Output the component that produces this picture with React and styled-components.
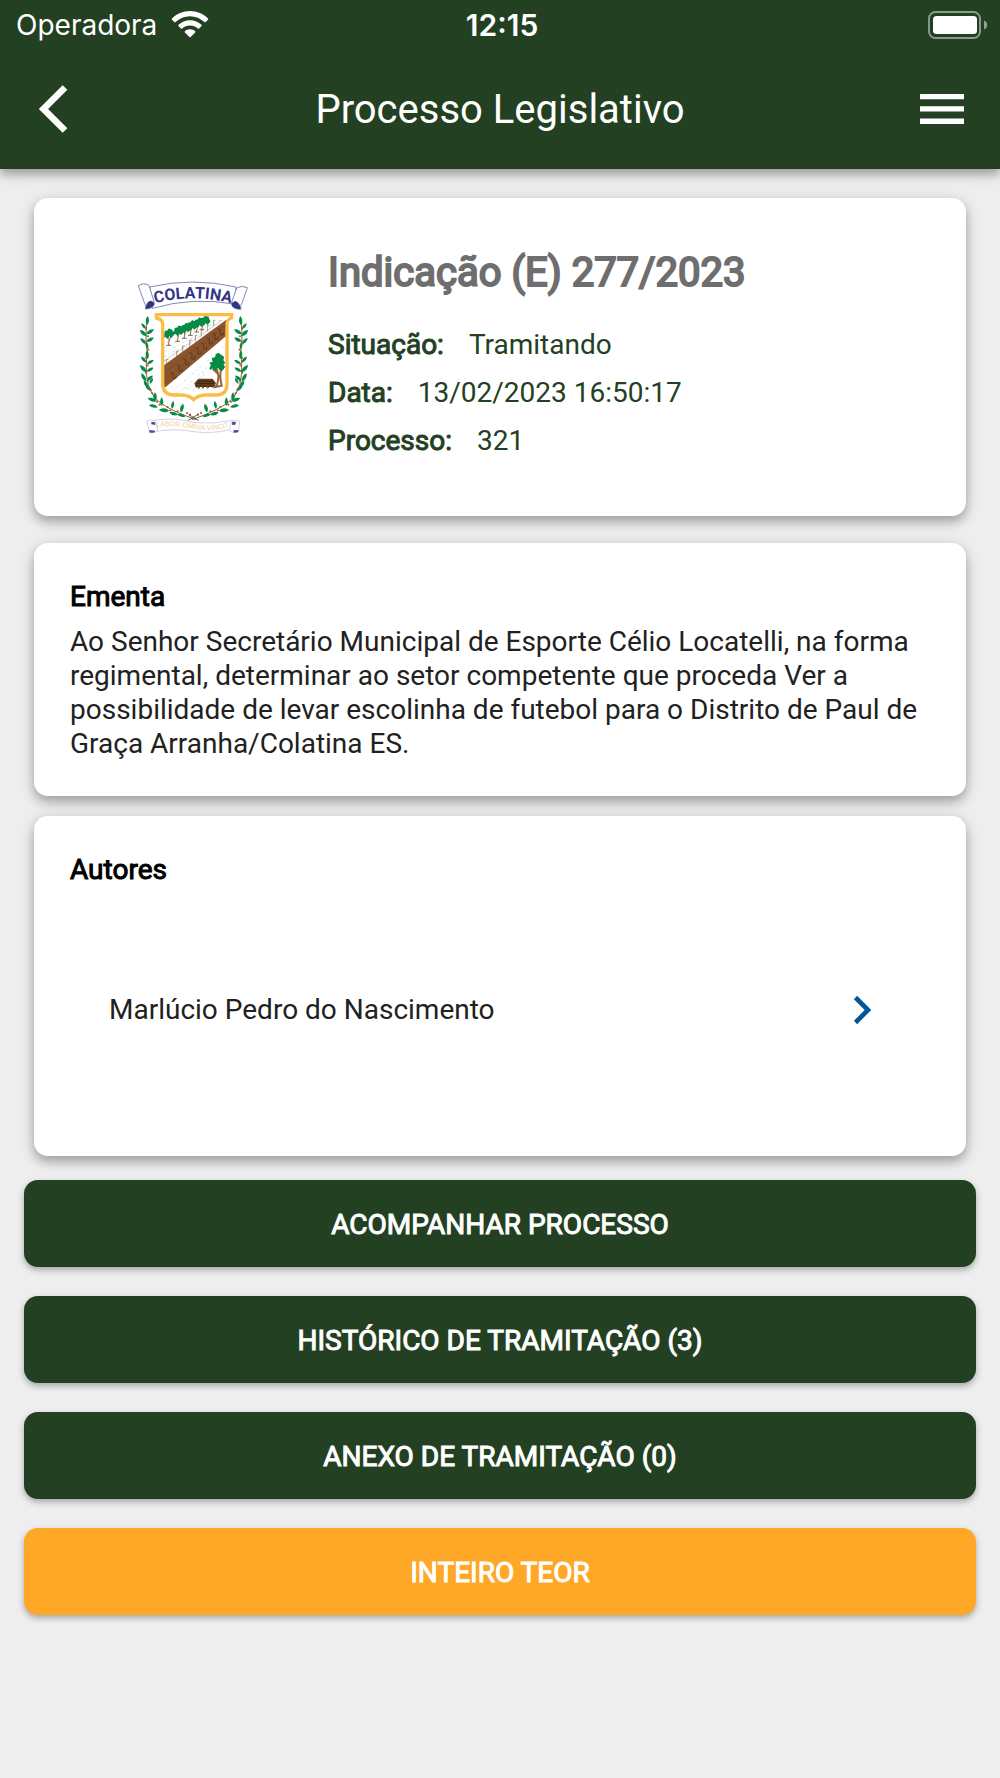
import React from "react";
import styled, { createGlobalStyle } from "styled-components";

const GREEN = "#234122";

const GlobalStyle = createGlobalStyle`
  *, *::before, *::after { box-sizing: border-box; }
  body {
    margin: 0;
    background: #eeeeee;
    color: #212121;
    font-family: Roboto, sans-serif;
    font-size: 28px;
    line-height: 34px;
  }
  h1, h2, p, dl, dt, dd, ul { margin: 0; padding: 0; }
  ul { list-style: none; }
  svg { display: block; }
`;

const Page = styled.div`
  min-height: 100vh;
  background: #eeeeee;
`;

const Header = styled.header`
  background: ${GREEN};
  color: #ffffff;
  box-shadow: 0 5px 10px rgba(0, 0, 0, 0.3), 0 2px 18px rgba(0, 0, 0, 0.12);
`;

const StatusBar = styled.div`
  display: grid;
  grid-template-columns: 1fr auto 1fr;
  align-items: center;
  height: 49px;
  padding: 0 12px 0 16px;
  font-family: Inter, sans-serif;
`;

const Carrier = styled.div`
  display: flex;
  align-items: center;
  gap: 14px;
`;

const Clock = styled.time`
  font-size: 30px;
  font-weight: 600;
`;

const BatteryBox = styled.div`
  justify-self: end;
`;

const Toolbar = styled.div`
  display: flex;
  align-items: center;
  justify-content: space-between;
  height: 120px;
  padding: 0 24px;
`;

const IconButton = styled.button`
  display: flex;
  align-items: center;
  justify-content: center;
  width: 68px;
  height: 68px;
  padding: 0;
  border: 0;
  background: none;
  color: inherit;
  cursor: pointer;
`;

const BackButton = styled(IconButton)`
  justify-content: flex-start;
  padding-left: 12px;
`;

const ScreenTitle = styled.h1`
  padding-top: 2px;
  font-size: 40px;
  line-height: 50px;
  font-weight: 400;
`;

const Content = styled.main`
  display: flex;
  flex-direction: column;
  padding: 29px 24px 0;
`;

const Card = styled.section`
  margin: 0 10px ${(p) => p.$gap}px;
  padding: 37px 36px 35px;
  border-radius: 14px;
  background: #ffffff;
  box-shadow: 0 6px 11px rgba(0, 0, 0, 0.27), 0 2px 18px rgba(0, 0, 0, 0.1);
`;

const SummaryCard = styled(Card)`
  display: grid;
  grid-template-columns: 270px 1fr;
  align-items: center;
  min-height: 318px;
  padding: 0 24px;
`;

const CrestBox = styled.div`
  display: flex;
  justify-content: center;
`;

const Summary = styled.div`
  padding-bottom: 9px;
`;

const ProcessTitle = styled.h2`
  margin-bottom: 30px;
  color: #6e6e6e;
  font-size: 40px;
  line-height: 50px;
  font-weight: 400;
  -webkit-text-stroke: 2px currentColor;
`;

const Facts = styled.dl`
  display: grid;
  gap: 14px;
  color: ${GREEN};
`;

const Fact = styled.div`
  display: flex;
  gap: 25px;
`;

const FactLabel = styled.dt`
  -webkit-text-stroke: 1px currentColor;
`;

const CardTitle = styled.h2`
  margin-bottom: 11px;
  color: #000000;
  font-size: 28px;
  font-weight: 400;
  -webkit-text-stroke: 1px currentColor;
`;

const AuthorLink = styled.a`
  display: flex;
  align-items: center;
  justify-content: space-between;
  height: 223px;
  padding: 0 58px 0 39px;
  color: inherit;
  text-decoration: none;
`;

const Actions = styled.div`
  display: grid;
  gap: 29px;
`;

const ActionButton = styled.button`
  height: 87px;
  padding: 2px 24px 0;
  border: 0;
  border-radius: 14px;
  background: ${(p) => (p.$accent ? "#ffa726" : GREEN)};
  color: #ffffff;
  font: inherit;
  text-transform: uppercase;
  -webkit-text-stroke: 1px currentColor;
  box-shadow: 0 3px 6px rgba(0, 0, 0, 0.3);
  cursor: pointer;
`;

function WifiIcon() {
  return (
    <svg width="38" height="28" viewBox="0 0 38 28" fill="#fff" aria-hidden="true">
      <path d="M19 0C26 0 32.300 2.800 37 7.400c.4.400.4.900 0 1.300l-2.300 2.300c-.4.400-.9.400-1.300 0C29.600 7.400 24.600 5.200 19 5.200S8.400 7.400 4.600 11c-.4.400-.9.400-1.300 0L1 8.700c-.4-.4-.4-.9 0-1.300C5.700 2.800 12 0 19 0Z" />
      <path d="M19 9.200c4.500 0 8.500 1.700 11.500 4.600.4.400.4.900 0 1.300l-2.400 2.300c-.3.400-.8.400-1.200 0-2.100-1.900-4.900-3-7.900-3s-5.800 1.100-7.900 3c-.4.400-.9.400-1.200 0l-2.400-2.300c-.4-.4-.4-.9 0-1.300 3-2.900 7-4.600 11.500-4.600Z" />
      <path d="M19 18.300c2 0 3.800.7 5.100 1.900.4.400.4.900 0 1.300l-4.500 4.600c-.4.400-.8.400-1.200 0l-4.500-4.600c-.4-.4-.4-.9 0-1.300 1.300-1.200 3.100-1.900 5.100-1.900Z" />
    </svg>
  );
}

function BatteryIcon() {
  return (
    <svg width="60" height="28" viewBox="0 0 60 28" role="img" aria-label="Bateria">
      <rect x="1" y="1" width="51" height="26" rx="6.500" fill="none" stroke="#fff" strokeOpacity=".48" strokeWidth="1.900" />
      <rect x="5" y="5" width="44" height="18" rx="3.500" fill="#fff" />
      <path d="M56 9.500c2 .8 3.200 2.500 3.200 4.500S58 17.700 56 18.500Z" fill="#fff" fillOpacity=".5" />
    </svg>
  );
}

function BackIcon() {
  return (
    <svg width="34" height="50" viewBox="0 0 34 50" aria-hidden="true">
      <path d="M29 3.500 7.500 25 29 46.500" fill="none" stroke="currentColor" strokeWidth="6.600" />
    </svg>
  );
}

function MenuIcon() {
  return (
    <svg width="44" height="30" viewBox="0 0 44 30" fill="currentColor" aria-hidden="true">
      <path d="M0 0h44v5.300H0zM0 12.300h44v5.300H0zM0 24.600h44v5.300H0z" />
    </svg>
  );
}

function ChevronIcon() {
  return (
    <svg width="20" height="30" viewBox="0 0 20 30" aria-hidden="true">
      <path d="M3.500 2.500 16 15 3.500 27.500" fill="none" stroke="#01579b" strokeWidth="4.600" />
    </svg>
  );
}

const RIVER_TREES = [
  [148, 224, 17],
  [175, 215, 14],
  [195, 207, 13],
  [213, 199, 12],
  [232, 191, 10],
  [248, 185, 8],
];

const BRIDGE_POSTS = [
  [141, 316], [172, 290], [190, 275], [211, 257], [228, 243], [246, 228], [264, 213], [283, 197], [302, 182],
];

const PIER_POSTS = [
  [161, 354], [180, 333], [199, 314], [218, 296], [236, 281], [253, 266], [270, 251], [287, 237], [303, 224],
];

const LEAVES = [
  [84, 181, -5, 14], [73, 197, 40, 11], [92, 214, -58, 14], [72, 218, 48, 14], [92, 238, -62, 13],
  [72, 242, 45, 13], [83, 256, 5, 11], [84, 283, 5, 13], [73, 298, 40, 12], [93, 305, -60, 12],
  [72, 325, 42, 15], [92, 328, -60, 12], [73, 351, 30, 14], [91, 354, -50, 13], [80, 371, 30, 13],
  [96, 362, -30, 10], [88, 384, 50, 13], [107, 410, 0, 14], [98, 418, 70, 14], [127, 424, 0, 13],
  [102, 437, 78, 14], [134, 450, 85, 16], [160, 434, -10, 12], [163, 460, 75, 14], [188, 443, -15, 14],
  [186, 465, 75, 13],
];

const BERRIES = [
  [80, 205], [86, 228], [79, 250], [87, 268], [80, 292], [85, 315], [80, 338], [86, 362], [92, 388],
  [99, 399], [113, 424], [121, 433], [145, 440], [153, 450], [175, 453], [203, 458], [212, 463],
];

function Laurel() {
  return (
    <g>
      <path d="M84 178C76 230 82 255 84 275 78 320 80 370 96 395 110 425 150 450 231 478" fill="none" stroke="#8f5a3c" strokeWidth="3" />
      {LEAVES.map(([x, y, turn, size]) => (
        <path
          key={`${x}-${y}`}
          d={`M0 ${-size}Q${size * 0.75} 0 0 ${size}Q${-size * 0.75} 0 0 ${-size}Z`}
          transform={`translate(${x} ${y}) rotate(${-turn})`}
          fill="#078a45"
        />
      ))}
      {BERRIES.map(([x, y]) => (
        <circle key={`${x}-${y}`} cx={x} cy={y} r="3.200" fill="#b5563c" />
      ))}
    </g>
  );
}

function Crest() {
  return (
    <svg width="112" height="153" viewBox="53 62 336 459" role="img" aria-label="Brasão de Colatina">
      <defs>
        <path id="nameArc" d="M102 130Q220 98 340 130" />
        <path id="mottoArc" d="M110 500Q160 493 222 505T332 498" />
        <clipPath id="field">
          <path d="M133 179H324V372Q324 401 292 401H255Q232 401 222 414 212 401 190 401H166Q133 401 133 372Z" />
        </clipPath>
      </defs>

      <g fill="#fff" stroke="#4a4990" strokeWidth="2">
        <path d="M91 80Q220 50 350 80L350 132Q220 108 100 144Z" />
        <path d="M57 76Q72 66 89 75L104 124Q106 140 92 144L78 146Q82 136 74 124Z" />
        <path d="M384 82Q368 74 352 83L337 126Q337 142 350 145L365 147Q361 136 369 126Z" />
      </g>
      <path d="M80 146Q78 126 93 121 105 123 105 132 101 143 80 146ZM363 147Q365 130 349 122 336 125 337 135 343 146 363 147Z" fill="#343486" />
      <text fill="#343486" fontFamily="Roboto, sans-serif" fontSize="48" fontWeight="700">
        <textPath href="#nameArc" startOffset="50%" textAnchor="middle">COLATINA</textPath>
      </text>

      <path d="M107 157H341V178Q326 181 326 190V370Q326 407 292 408H260Q235 408 222 423 210 408 188 408H164Q129 407 127 370V190Q126 180 107 178Z" fill="#fff" />
      <g clipPath="url(#field)">
        <g fill="none" stroke="#cfe6ee" strokeWidth="3" strokeDasharray="9 7 4 10">
          <path d="M134 262L300 182M134 276L296 192M134 290L270 214M140 248L230 206M134 302L220 248" />
          <path d="M172 382L324 250M190 386L324 268M205 388L270 330M170 398L250 360M220 392L262 318M300 290L324 282" />
        </g>
        <path d="M132 316L324 176V224L132 386Z" fill="#8a552c" />
        <path d="M132 340L324 192M132 362L324 208" stroke="#7a4825" strokeWidth="2" />
        <path d="M132 304L324 168" stroke="#b9a99a" strokeWidth="1.500" />
        {PIER_POSTS.map(([x, y]) => (
          <path key={x} d={`M${x} ${y}v-16l-8-3M${x} ${y}h9v-8`} fill="none" stroke="#5a3317" strokeWidth="2.500" />
        ))}
        {BRIDGE_POSTS.map(([x, y]) => (
          <path key={x} d={`M${x} ${y}v-18h6`} fill="none" stroke="#6e5a50" strokeWidth="1.800" />
        ))}
      </g>
      {RIVER_TREES.map(([x, y, r]) => (
        <g key={x}>
          <path d={`M${x - 2} ${y}q7 14 1 ${r + 14}m-6 0h14M${x} ${y + r}l8-12`} fill="none" stroke="#8c6840" strokeWidth="3" />
          <path
            d={`M${x - r} ${y + 8}q-4-9 4-12 -1-11 9-9 2-9 9-5 9 2 7 9 7 5 2 11l-7 7-5-6-5 9-7-6Z`}
            fill="#078a45"
          />
        </g>
      ))}
      <path d="M289 320Q303 345 293 374L288 380 307 376Q301 350 304 333L314 318M296 340L280 325" fill="none" stroke="#94643b" strokeWidth="6" />
      <path d="M270 324l5-9-5-8 10-3-3-10 10-4 3-9 8-4 8 7 9 6-3 9 6 9-5 4 4 9-7 9-10-1-4-7-8 9-8-7-7 5Z" fill="#078a45" />
      <path d="M237 355H280L290 368 285 380H229L225 369Z" fill="#6b3d19" />
      <path d="M230 382l3-6 5 9 6-10 7 9 6-9 8 9 7-9 7 7M234 363h46M230 370h54" fill="none" stroke="#2d1b10" strokeWidth="2.500" />
      <path d="M111 163H337V173Q323 177 323 190V371Q323 404 291 404H260Q235 405 223 418 211 405 188 404H164Q131 404 130 371V190Q129 177 111 173Z" fill="none" stroke="#fbbd45" strokeWidth="10" />

      <Laurel />
      <g transform="translate(448 0) scale(-1 1)">
        <Laurel />
      </g>
      <path d="M208 463L238 480M236 462L207 480" stroke="#2d4a2a" strokeWidth="2.500" />

      <g fill="#fff" stroke="#a9a8c8" strokeWidth="1.600">
        <path d="M106 480Q165 469 224 487 285 492 340 480L334 508Q280 521 222 514 165 503 112 513Z" />
        <path d="M82 482Q95 475 108 482L115 509Q110 517 100 516L90 515ZM361 483Q349 475 337 483L330 508Q336 518 346 517L357 515Z" />
      </g>
      <path d="M96 484l11 2 1 8-12-2ZM90 509l18 2-4 6H91ZM338 485l12-1-2 9-9 1ZM342 510l16-1-3 7-11 1Z" fill="#4a4990" />
      <text fill="#f2cf95" fontFamily="Liberation Sans, sans-serif" fontSize="21">
        <textPath href="#mottoArc" startOffset="50%" textAnchor="middle">LABOR OMNIA VINCIT</textPath>
      </text>
    </svg>
  );
}

const FACTS = [
  ["Situação:", "Tramitando"],
  ["Data:", "13/02/2023 16:50:17"],
  ["Processo:", "321"],
];

export default function App() {
  return (
    <Page>
      <GlobalStyle />
      <Header>
        <StatusBar>
          <Carrier>
            <span>Operadora</span>
            <WifiIcon />
          </Carrier>
          <Clock>12:15</Clock>
          <BatteryBox>
            <BatteryIcon />
          </BatteryBox>
        </StatusBar>
        <Toolbar>
          <BackButton type="button" aria-label="Voltar">
            <BackIcon />
          </BackButton>
          <ScreenTitle>Processo Legislativo</ScreenTitle>
          <IconButton type="button" aria-label="Menu">
            <MenuIcon />
          </IconButton>
        </Toolbar>
      </Header>

      <Content>
        <SummaryCard $gap={27}>
          <CrestBox>
            <Crest />
          </CrestBox>
          <Summary>
            <ProcessTitle>Indicação (E) 277/2023</ProcessTitle>
            <Facts>
              {FACTS.map(([label, value]) => (
                <Fact key={label}>
                  <FactLabel>{label}</FactLabel>
                  <dd>{value}</dd>
                </Fact>
              ))}
            </Facts>
          </Summary>
        </SummaryCard>

        <Card $gap={20}>
          <CardTitle>Ementa</CardTitle>
          <p>
            Ao Senhor Secretário Municipal de Esporte Célio Locatelli, na forma regimental, determinar ao
            setor competente que proceda Ver a possibilidade de levar escolinha de futebol para o Distrito
            de Paul de Graça Arranha/Colatina ES.
          </p>
        </Card>

        <Card $gap={24}>
          <CardTitle>Autores</CardTitle>
          <ul>
            <li>
              <AuthorLink href="#autor">
                <span>Marlúcio Pedro do Nascimento</span>
                <ChevronIcon />
              </AuthorLink>
            </li>
          </ul>
        </Card>

        <Actions>
          <ActionButton type="button">Acompanhar processo</ActionButton>
          <ActionButton type="button">Histórico de tramitação (3)</ActionButton>
          <ActionButton type="button">Anexo de tramitação (0)</ActionButton>
          <ActionButton type="button" $accent>Inteiro teor</ActionButton>
        </Actions>
      </Content>
    </Page>
  );
}
